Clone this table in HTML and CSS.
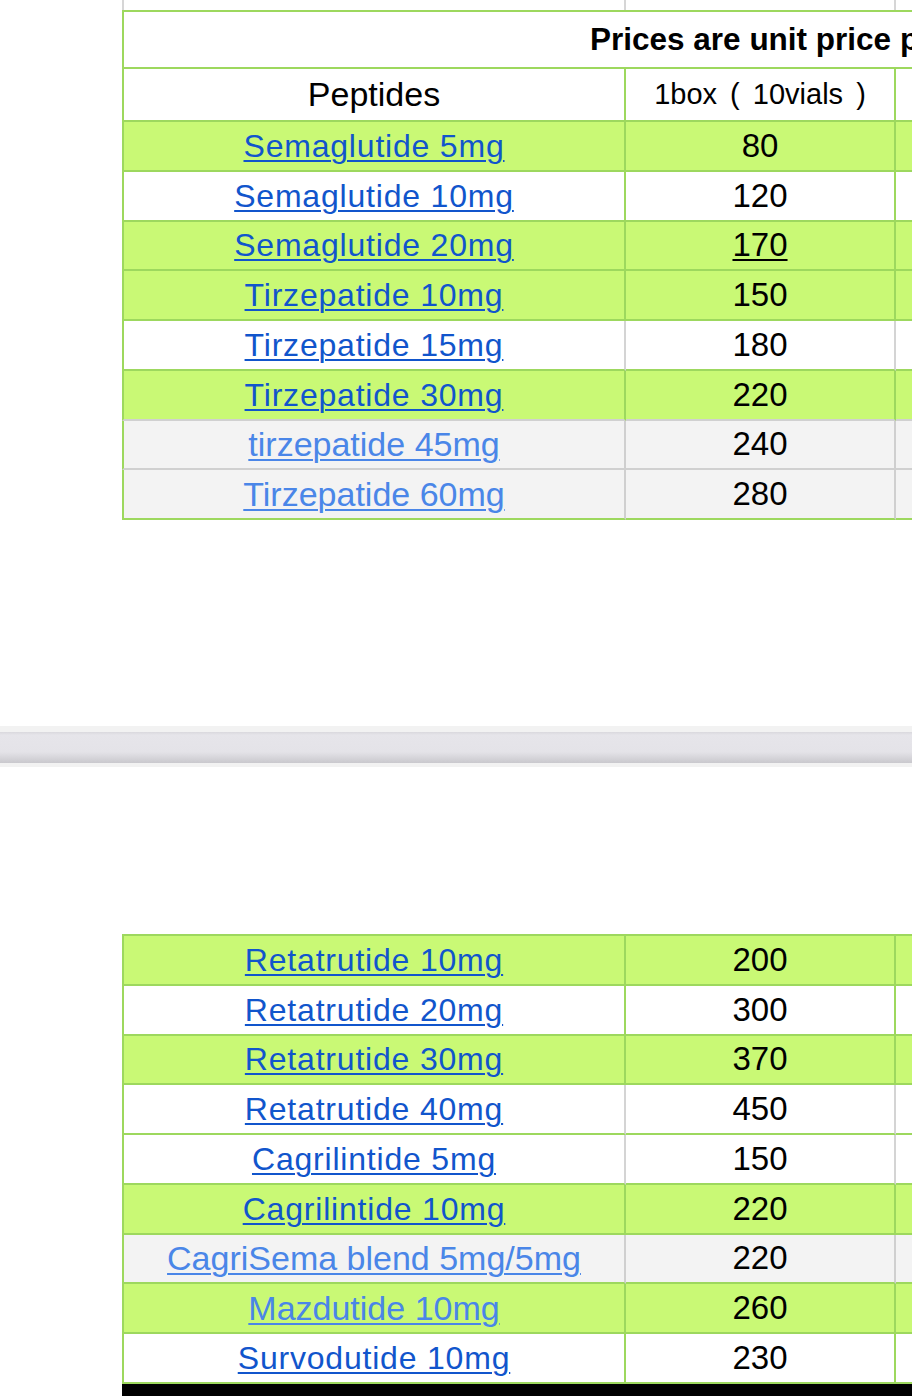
FILE: index.html
```html
<!DOCTYPE html>
<html>
<head>
<meta charset="utf-8">
<link rel="stylesheet" href="styles.css">
</head>
<body>
<table class="grid top">
  <colgroup><col class="c1"><col class="c2"><col class="c3"></colgroup>
  <tr class="stub"><td></td><td></td><td></td></tr>
  <tr class="title"><td colspan="3">Prices are unit price per box</td></tr>
  <tr class="head"><td>Peptides</td><td class="small">1box ( 10vials )</td><td></td></tr>
  <tr class="lime"><td><a href="#">Semaglutide 5mg</a></td><td>80</td><td></td></tr>
  <tr class="white"><td><a href="#">Semaglutide 10mg</a></td><td>120</td><td></td></tr>
  <tr class="lime"><td><a href="#">Semaglutide 20mg</a></td><td><u>170</u></td><td></td></tr>
  <tr class="lime"><td><a href="#">Tirzepatide 10mg</a></td><td>150</td><td></td></tr>
  <tr class="white soft"><td><a href="#">Tirzepatide 15mg</a></td><td>180</td><td></td></tr>
  <tr class="lime grey-bottom"><td><a href="#">Tirzepatide 30mg</a></td><td>220</td><td></td></tr>
  <tr class="grey grey-bottom"><td><a class="light" href="#">tirzepatide 45mg</a></td><td>240</td><td></td></tr>
  <tr class="grey"><td><a class="light" href="#">Tirzepatide 60mg</a></td><td>280</td><td></td></tr>
</table>

<div class="gap-a"></div>
<div class="band"><div class="band-inner"></div></div>
<div class="gap-b"></div>

<table class="grid bottom">
  <colgroup><col class="c1"><col class="c2"><col class="c3"></colgroup>
  <tr class="lime first"><td><a href="#">Retatrutide 10mg</a></td><td>200</td><td></td></tr>
  <tr class="white"><td><a href="#">Retatrutide 20mg</a></td><td>300</td><td></td></tr>
  <tr class="lime"><td><a href="#">Retatrutide 30mg</a></td><td>370</td><td></td></tr>
  <tr class="white soft"><td><a href="#">Retatrutide 40mg</a></td><td>450</td><td></td></tr>
  <tr class="white soft"><td><a href="#">Cagrilintide 5mg</a></td><td>150</td><td></td></tr>
  <tr class="lime"><td><a href="#">Cagrilintide 10mg</a></td><td>220</td><td></td></tr>
  <tr class="grey"><td><a class="light" href="#">CagriSema blend 5mg/5mg</a></td><td>220</td><td></td></tr>
  <tr class="lime"><td><a class="light" href="#">Mazdutide 10mg</a></td><td>260</td><td></td></tr>
  <tr class="white"><td><a href="#">Survodutide 10mg</a></td><td>230</td><td></td></tr>
</table>
<div class="blackbar"></div>
</body>
</html>
```

FILE: styles.css
```css
html, body {
  margin: 0;
  padding: 0;
  background: #ffffff;
  overflow: hidden;
  width: 912px;
  height: 1396px;
}

body {
  font-family: "Liberation Sans", Arial, Helvetica, sans-serif;
  color: #000;
}

.grid {
  border-collapse: separate;
  border-spacing: 0;
  table-layout: fixed;
  width: 1076px;
  margin-left: 122px;
}

.c1 { width: 504px; }
.c2 { width: 270px; }
.c3 { width: 302px; }

.grid td {
  box-sizing: border-box;
  padding: 0;
  text-align: center;
  vertical-align: middle;
  border-right: 2px solid #9dd85e;
  border-bottom: 2px solid #9dd85e;
  font-size: 33px;
  height: 49.75px;
  white-space: nowrap;
  overflow: hidden;
}

.grid td:first-child {
  border-left: 2px solid #9dd85e;
}

/* stub of the cell above */
.stub td {
  height: 10px;
  border-bottom: none;
  border-right: 2px solid #d6d6d6;
}
.stub td:first-child {
  border-left: 2px solid #d6d6d6;
}

.title td {
  height: 59px;
  border-top: 2px solid #9dd85e;
  text-align: left;
  padding-left: 466px;
  font-weight: bold;
  font-size: 31.5px;
  background: #fff;
}

.head td {
  height: 53px;
  font-size: 34px;
  background: #fff;
}
.head td.small {
  font-size: 29px;
  word-spacing: 5px;
}

.lime td { background: #c9f975; }
.white td { background: #ffffff; }
.grey td { background: #f3f3f3; }

.soft td {
  border-right-color: #d4d4d4;
}
.soft td:first-child {
  border-left-color: #9dd85e;
}
.grey td {
  border-right-color: #cfcfcf;
}
.grey-bottom td {
  border-bottom-color: #d0d0d0;
}

.bottom .first td {
  border-top: 2px solid #9dd85e;
  height: 51.75px;
}

a {
  color: #1155cc;
  font-size: 32px;
  letter-spacing: 0.8px;
  text-decoration: underline;
  text-decoration-thickness: 2px;
  text-underline-offset: 3px;
}

a.light {
  color: #4a86e8;
  font-size: 34px;
  letter-spacing: 0;
}

u {
  text-decoration-thickness: 2px;
  text-underline-offset: 3px;
}

.gap-a { height: 206px; }

.band {
  height: 41px;
  background: #f2f2f2;
  padding: 6px 0 4px 0;
  box-sizing: border-box;
}
.band-inner {
  height: 31px;
  background: linear-gradient(to bottom, #d9d8dd 0px, #e6e5ea 3px, #e4e3e8 20px, #c9c8cd 31px);
}

.gap-b { height: 167px; }

.blackbar {
  margin-left: 122px;
  height: 40px;
  background: #000;
}
```
